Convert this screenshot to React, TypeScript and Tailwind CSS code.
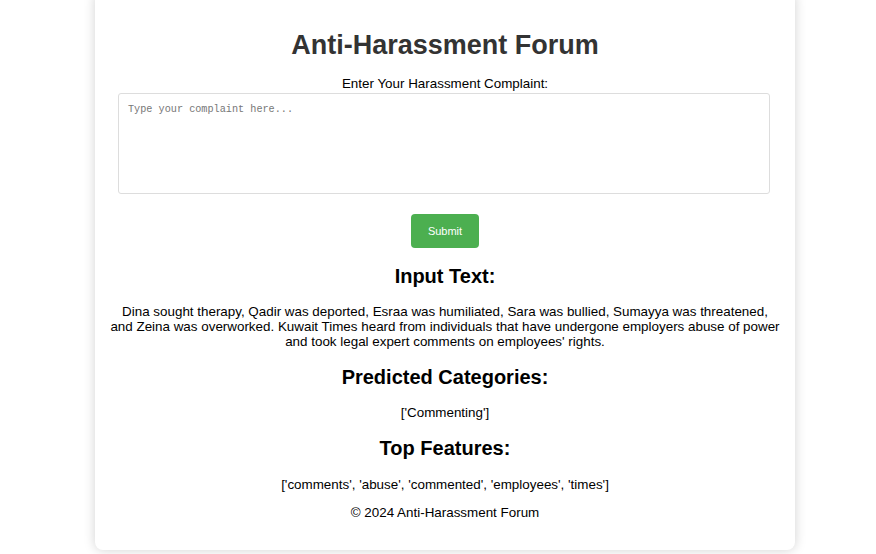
import React from "react";

function App() {
    const inputText =
        "Dina sought therapy, Qadir was deported, Esraa was humiliated, Sara was bullied, Sumayya was threatened, and Zeina was overworked. Kuwait Times heard from individuals that have undergone employers abuse of power and took legal expert comments on employees' rights.";

    return (
        <div className="min-h-[554px] w-full bg-white font-['Liberation_Sans',Arial,sans-serif] text-black overflow-hidden">
            <div className="ml-[95px] mt-[-8px] w-[700px] rounded-lg bg-white shadow-[0_0_12px_rgba(0,0,0,0.18)] px-[23px] pt-[37px] pb-[29px] text-center">
                {/* Header */}
                <h1 className="text-[27px] leading-[32px] font-bold text-[#333]">
                    Anti-Harassment Forum
                </h1>

                {/* Complaint form */}
                <form className="mt-[15px] flex flex-col items-center">
                    <label className="text-[13.4px] leading-[16px] text-black">
                        Enter Your Harassment Complaint:
                    </label>
                    <textarea
                        placeholder="Type your complaint here..."
                        className="mt-[1px] h-[101px] w-[652px] self-start resize-none rounded-[3px] border border-[#ddd] px-[9px] pt-[10px] pb-[8px] font-['Liberation_Mono',monospace] text-[10.2px] leading-[12px] placeholder:text-[#777] outline-none"
                    />
                    <button
                        type="button"
                        className="mt-[20px] h-[34px] w-[68px] rounded-[4px] bg-[#4caf50] text-[11px] text-white"
                    >
                        Submit
                    </button>
                </form>

                {/* Results */}
                <h2 className="mt-[16px] text-[20px] leading-[24px] font-bold">Input Text:</h2>
                <p className="ml-[-8px] mt-[16px] w-[670px] text-[13.4px] leading-[15px]">{inputText}</p>

                <h2 className="mt-[16px] text-[20px] leading-[24px] font-bold">
                    Predicted Categories:
                </h2>
                <p className="mt-[16px] text-[13.4px] leading-[16px]">['Commenting']</p>

                <h2 className="mt-[15px] text-[20px] leading-[24px] font-bold">Top Features:</h2>
                <p className="mt-[17px] text-[13.4px] leading-[16px]">
                    ['comments', 'abuse', 'commented', 'employees', 'times']
                </p>

                <footer className="mt-[12px] text-[13.4px] leading-[16px]">
                    © 2024 Anti-Harassment Forum
                </footer>
            </div>
        </div>
    );
}

export default App;
